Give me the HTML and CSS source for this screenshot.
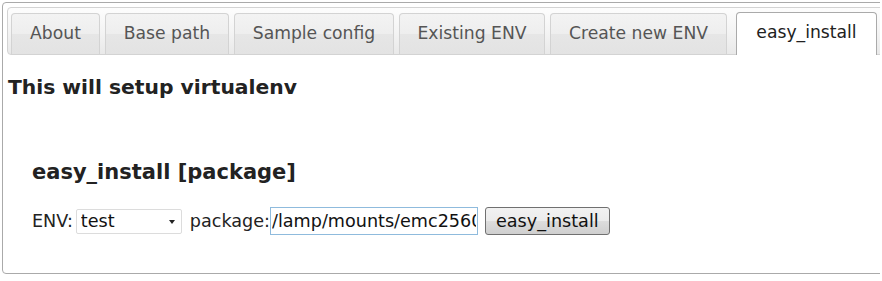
FILE: index.html
```html
<!DOCTYPE html>
<html lang="en">
<head>
    <meta charset="UTF-8">
    <title>virtualenv setup</title>
    <link rel="stylesheet" href="styles.css">
</head>
<body>
    <!-- Tabs widget -->
    <div class="tabs">
        <ul class="tab-nav">
            <li class="tab-about"><a href="#about">About</a></li>
            <li class="tab-base"><a href="#base">Base path</a></li>
            <li class="tab-sample"><a href="#sample">Sample config</a></li>
            <li class="tab-existing"><a href="#existing">Existing ENV</a></li>
            <li class="tab-create"><a href="#create">Create new ENV</a></li>
            <li class="tab-easy active"><a href="#easy">easy_install</a></li>
        </ul>

        <div class="panel" id="easy">
            <h3>This will setup virtualenv</h3>

            <div class="install-box">
                <h3>easy_install [package]</h3>
                <form class="install-row">
                    <label class="env-label">ENV:</label>
                    <span class="select-wrap">
                        <select class="env-select">
                            <option>test</option>
                        </select>
                    </span>
                    <label class="pkg-label">package:</label>
                    <input class="pkg-input" type="text" value="/lamp/mounts/emc2560/packages">
                    <button class="install-btn" type="button">easy_install</button>
                </form>
            </div>
        </div>
    </div>
</body>
</html>
```

FILE: styles.css
```css
/* Page */
html {
    overflow: hidden;
}

body {
    margin: 2px;
    font-family: 'DejaVu Sans', Verdana, sans-serif;
    background: #fff;
    color: #222;
}

/* Tabs widget */
.tabs {
    width: 900px;
    height: 272px;
    box-sizing: border-box;
    border: 1px solid #aaa;
    border-radius: 4px;
    padding: 4px 4px 0 4px;
}

.tab-nav {
    list-style: none;
    margin: 0;
    padding: 4px 3px 0 3px;
    display: flex;
    align-items: flex-end;
    gap: 5px;
    border: 1px solid #d3d3d3;
    border-radius: 4px;
    background: linear-gradient(to bottom, #fdfdfd 0%, #f4f4f4 50%, #e9e9e9 100%);
}

.tab-nav li {
    box-sizing: border-box;
    border: 1px solid #d3d3d3;
    border-bottom: none;
    border-radius: 4px 4px 0 0;
    background: linear-gradient(to bottom, #f3f3f3 0%, #eeeeee 50%, #e6e6e6 51%, #e3e3e3 100%);
    text-align: center;
}

.tab-nav li a {
    display: block;
    padding: 9px 0 11px 0;
    font-size: 17.2px;
    line-height: 20px;
    color: #555;
    text-decoration: none;
}

/* tab widths */
.tab-about { width: 89px; }
.tab-base { width: 124px; }
.tab-sample { width: 160px; }
.tab-existing { width: 146px; }
.tab-create { width: 177px; }
.tab-easy { width: 141px; margin-left: 4px; }

.tab-nav li.active {
    background: #fff;
    border-color: #aaa;
    padding-bottom: 2px;
    margin-bottom: -1px;
}

.tab-nav li.active a {
    color: #212121;
}

/* Panel content */
.panel {
    padding: 0 1px;
}

.panel h3 {
    margin: 20px 0 0 0;
    font-size: 20.3px;
    line-height: 24px;
    font-weight: bold;
    color: #222;
}

.install-box {
    margin-top: 61px;
    padding-left: 24px;
}

.install-box h3 {
    margin: 0;
    font-size: 21px;
}

.install-row {
    display: flex;
    align-items: center;
    margin-top: 23px;
    font-size: 17.6px;
    color: #222;
}

.env-label {
    margin-right: 3px;
}

.select-wrap {
    position: relative;
    display: inline-block;
}

.select-wrap::after {
    content: "";
    position: absolute;
    right: 7px;
    top: 11px;
    border-left: 3px solid transparent;
    border-right: 3px solid transparent;
    border-top: 4px solid #222;
    pointer-events: none;
}

.env-select {
    appearance: none;
    -webkit-appearance: none;
    width: 106px;
    height: 25px;
    border: 1px solid #dcdcdc;
    border-radius: 2px;
    background: #fff;
    padding: 0 4px;
    font-family: inherit;
    font-size: 17.6px;
    color: #111;
}

.pkg-label {
    margin-left: 8px;
    margin-right: 0;
}

.pkg-input {
    width: 208px;
    height: 28px;
    box-sizing: border-box;
    border: 1px solid #8fbbdd;
    padding: 0 1px;
    font-family: inherit;
    font-size: 17.6px;
    color: #111;
    outline: none;
}

.install-btn {
    margin-left: 7px;
    height: 28px;
    padding: 0 10px;
    border: 1px solid #707070;
    border-radius: 3px;
    background: linear-gradient(to bottom, #f2f2f2 0%, #ebebeb 50%, #dddddd 51%, #cfcfcf 100%);
    font-family: inherit;
    font-size: 17.6px;
    color: #111;
}
```
